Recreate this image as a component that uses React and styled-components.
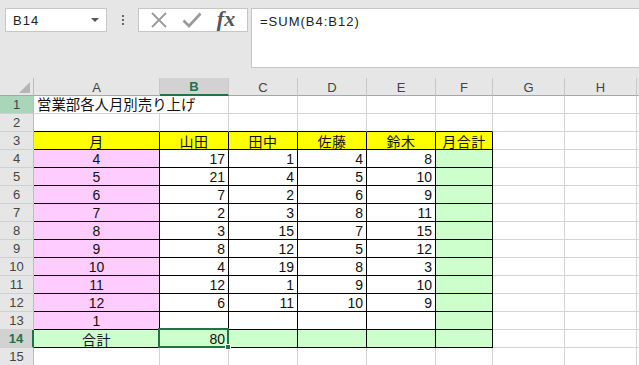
import React from "react";
import styled, { createGlobalStyle } from "styled-components";

const Global = createGlobalStyle`
  html, body { margin: 0; padding: 0; background: #e6e6e6; overflow: hidden; }
  * { box-sizing: border-box; }
`;

const UI = `"Liberation Sans", "Noto Sans CJK JP", sans-serif`;
const GREEN = "#217346";

const Page = styled.div`
  width: 639px;
  height: 365px;
  background: #e6e6e6;
  overflow: hidden;
  font-family: ${UI};
`;

const FormulaBar = styled.div`
  display: flex;
  align-items: flex-start;
  height: 78px;
  padding-top: 8px;
  padding-left: 5px;
`;

const NameBox = styled.div`
  width: 102px;
  height: 24px;
  background: #fff;
  border: 1px solid #c6c6c6;
  display: flex;
  align-items: center;
  justify-content: space-between;
  padding: 0 6px 0 7px;
  font-size: 13px;
  letter-spacing: 1px;
  color: #222;
`;

const Caret = styled.span`
  width: 0;
  height: 0;
  border-left: 4px solid transparent;
  border-right: 4px solid transparent;
  border-top: 4px solid #555;
  margin-right: 1px;
`;

const Grip = styled.div`
  width: 31px;
  height: 24px;
  display: flex;
  flex-direction: column;
  align-items: center;
  justify-content: center;
  gap: 2px;
  padding-left: 1px;
  & > span {
    width: 2px;
    height: 2px;
    background: #666;
  }
`;

const FxButtons = styled.div`
  width: 110px;
  height: 24px;
  background: #fff;
  border: 1px solid #c6c6c6;
  display: flex;
  align-items: center;
  padding-left: 7px;
`;

const IconSlot = styled.span`
  width: ${(p) => p.$w}px;
  display: flex;
  align-items: center;
  justify-content: center;
`;

const Fx = styled.span`
  font-family: "Liberation Serif", "DejaVu Serif", serif;
  font-style: italic;
  font-weight: bold;
  font-size: 22px;
  color: #555;
  line-height: 1;
  margin-top: -3px;
`;

const FormulaInput = styled.div`
  margin-left: 3px;
  flex: 1;
  height: 60px;
  background: #fff;
  border: 1px solid #c6c6c6;
  border-right: none;
  padding: 5px 0 0 8px;
  font-size: 13px;
  letter-spacing: 1px;
  color: #222;
`;

const Sheet = styled.div`
  display: grid;
  grid-template-columns: 34px 126px 69px 69px 69px 69px 57px 72px 72px 72px;
  grid-auto-rows: 18px;
  background: #fff;
`;

const Corner = styled.div`
  background: #e6e6e6;
  border-right: 1px solid #bcbcbc;
  border-bottom: 1px solid #a6a6a6;
  display: flex;
  align-items: flex-end;
  justify-content: flex-end;
  padding: 0 3px 2px 0;
`;

const ColHead = styled.div`
  background: ${(p) => (p.$sel ? "#d2d2d2" : "#e6e6e6")};
  border-right: 1px solid #c9c9c9;
  border-bottom: ${(p) => (p.$sel ? `2px solid ${GREEN}` : "1px solid #a6a6a6")};
  color: ${(p) => (p.$sel ? GREEN : "#444")};
  font-family: "Liberation Sans", Arial, sans-serif;
  font-size: 13px;
  font-weight: ${(p) => (p.$sel ? "bold" : "normal")};
  display: flex;
  align-items: center;
  justify-content: center;
  padding-top: 1px;
`;

const RowHead = styled.div`
  background: ${(p) => (p.$sel ? "#d2d2d2" : p.$hl ? "#a9d6b8" : "#e6e6e6")};
  border-right: ${(p) => (p.$sel ? `2px solid ${GREEN}` : "1px solid #bcbcbc")};
  border-bottom: 1px solid #d0d0d0;
  color: ${(p) => (p.$sel ? GREEN : "#444")};
  font-family: "Liberation Sans", Arial, sans-serif;
  font-size: 13px;
  font-weight: ${(p) => (p.$sel ? "bold" : "normal")};
  display: flex;
  align-items: center;
  justify-content: center;
`;

const Cell = styled.div`
  position: relative;
  grid-column: span ${(p) => p.$span || 1};
  background: ${(p) => p.$bg || "#fff"};
  border-right: 1px solid ${(p) => (p.$rb ? "#000" : "#d4d4d4")};
  border-bottom: 1px solid ${(p) => (p.$bb ? "#000" : "#d4d4d4")};
  font-family: "Liberation Sans", "Noto Sans CJK JP", sans-serif;
  font-size: 14px;
  color: #111;
  display: flex;
  align-items: center;
  justify-content: ${(p) => (p.$align === "center" ? "center" : p.$align === "left" ? "flex-start" : "flex-end")};
  padding: 0 3px;
  white-space: nowrap;
  line-height: 1;
`;

const JpText = styled.span`
  font-family: "Noto Sans CJK JP", sans-serif;
  font-size: ${(p) => p.$size || 14}px;
  letter-spacing: ${(p) => p.$ls || 0}px;
  line-height: 1;
`;

const Selection = styled.div`
  position: absolute;
  top: -2px;
  left: -2px;
  right: -1px;
  bottom: -1px;
  border: 2px solid ${GREEN};
  z-index: 2;
  pointer-events: none;
`;

const Handle = styled.div`
  position: absolute;
  right: -4px;
  bottom: -4px;
  width: 6px;
  height: 6px;
  background: ${GREEN};
  border: 1px solid #fff;
`;

const YELLOW = "#ffff00";
const PINK = "#ffccff";
const LGREEN = "#ccffcc";

const cols = ["A", "B", "C", "D", "E", "F", "G", "H", ""];

const data = [
  [4, 17, 1, 4, 8],
  [5, 21, 4, 5, 10],
  [6, 7, 2, 6, 9],
  [7, 2, 3, 8, 11],
  [8, 3, 15, 7, 15],
  [9, 8, 12, 5, 12],
  [10, 4, 19, 8, 3],
  [11, 12, 1, 9, 10],
  [12, 6, 11, 10, 9],
  [1, "", "", "", ""],
];

const inTable = (r, c) => r >= 3 && r <= 14 && c >= 0 && c <= 5;

function cellInfo(r, c) {
  let text = "";
  let bg;
  let align = "right";
  let span = 1;
  if (r === 1 && c === 0) {
    text = <JpText $size={14.4}>営業部各人月別売り上げ</JpText>;
    align = "left";
    span = 2;
  }
  if (r === 3 && c <= 5) {
    bg = YELLOW;
    align = "center";
    text = <JpText $ls={0.5}>{["月", "山田", "田中", "佐藤", "鈴木", "月合計"][c]}</JpText>;
  }
  if (r >= 4 && r <= 13) {
    const row = data[r - 4];
    if (c === 0) {
      bg = PINK;
      align = "center";
      text = row[0];
    } else if (c <= 4) {
      text = row[c];
    } else if (c === 5) {
      bg = LGREEN;
    }
  }
  if (r === 14 && c <= 5) {
    bg = LGREEN;
    if (c === 0) {
      text = <JpText $ls={0.5}>合計</JpText>;
      align = "center";
    }
    if (c === 1) text = 80;
  }
  return { text, bg, align, span };
}

const Cross = () => (
  <svg width="18" height="16" viewBox="0 0 18 16">
    <path d="M2 1 L16 15 M16 1 L2 15" stroke="#9a9a9a" strokeWidth="1.8" fill="none" />
  </svg>
);

const Check = () => (
  <svg width="20" height="16" viewBox="0 0 20 16">
    <path d="M1.5 8.5 L7 14 L18.5 1.5" stroke="#9a9a9a" strokeWidth="2.6" fill="none" />
  </svg>
);

const CornerMark = () => (
  <svg width="11" height="11" viewBox="0 0 11 11">
    <polygon points="11,0 11,11 0,11" fill="#b5b5b5" />
  </svg>
);

export default function App() {
  const rows = [];
  for (let r = 1; r <= 15; r++) {
    rows.push(
      <RowHead key={`h${r}`} $sel={r === 14} $hl={r === 1}>
        {r}
      </RowHead>
    );
    for (let c = 0; c < cols.length; c++) {
      if (r === 1 && c === 1) continue;
      const { text, bg, align, span } = cellInfo(r, c);
      const last = c + span - 1;
      const rb = inTable(r, last) || inTable(r, last + 1);
      const bb = inTable(r, c) || inTable(r + 1, c);
      rows.push(
        <Cell key={`${r}-${c}`} $bg={bg} $align={align} $rb={rb} $bb={bb} $span={span}>
          {text}
          {r === 14 && c === 1 && (
            <Selection>
              <Handle />
            </Selection>
          )}
        </Cell>
      );
    }
  }

  return (
    <Page>
      <Global />
      <FormulaBar>
        <NameBox>
          <span>B14</span>
          <Caret />
        </NameBox>
        <Grip>
          <span />
          <span />
          <span />
        </Grip>
        <FxButtons>
          <IconSlot $w={26}>
            <Cross />
          </IconSlot>
          <IconSlot $w={40}>
            <Check />
          </IconSlot>
          <IconSlot $w={28}>
            <Fx>fx</Fx>
          </IconSlot>
        </FxButtons>
        <FormulaInput>=SUM(B4:B12)</FormulaInput>
      </FormulaBar>
      <Sheet>
        <Corner>
          <CornerMark />
        </Corner>
        {cols.map((c, i) => (
          <ColHead key={i} $sel={c === "B"}>
            {c}
          </ColHead>
        ))}
        {rows}
      </Sheet>
    </Page>
  );
}
